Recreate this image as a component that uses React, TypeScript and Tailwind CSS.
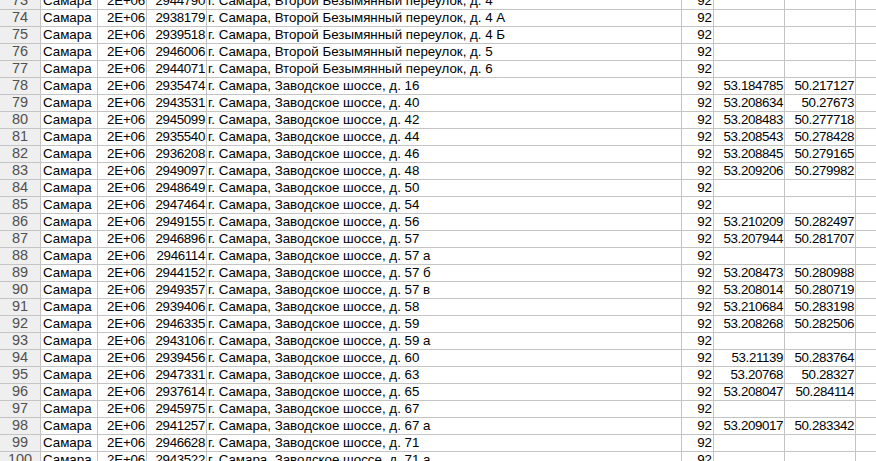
import React from "react";

type Row = [number, string, string, string, string, string];

const B = "г. Самара, Второй Безымянный переулок, д. ";
const Z = "г. Самара, Заводское шоссе, д. ";

const rows: Row[] = [
  [73, "2944790", B + "4", "92", "", ""],
  [74, "2938179", B + "4 А", "92", "", ""],
  [75, "2939518", B + "4 Б", "92", "", ""],
  [76, "2946006", B + "5", "92", "", ""],
  [77, "2944071", B + "6", "92", "", ""],
  [78, "2935474", Z + "16", "92", "53.184785", "50.217127"],
  [79, "2943531", Z + "40", "92", "53.208634", "50.27673"],
  [80, "2945099", Z + "42", "92", "53.208483", "50.277718"],
  [81, "2935540", Z + "44", "92", "53.208543", "50.278428"],
  [82, "2936208", Z + "46", "92", "53.208845", "50.279165"],
  [83, "2949097", Z + "48", "92", "53.209206", "50.279982"],
  [84, "2948649", Z + "50", "92", "", ""],
  [85, "2947464", Z + "54", "92", "", ""],
  [86, "2949155", Z + "56", "92", "53.210209", "50.282497"],
  [87, "2946896", Z + "57", "92", "53.207944", "50.281707"],
  [88, "2946114", Z + "57 а", "92", "", ""],
  [89, "2944152", Z + "57 б", "92", "53.208473", "50.280988"],
  [90, "2949357", Z + "57 в", "92", "53.208014", "50.280719"],
  [91, "2939406", Z + "58", "92", "53.210684", "50.283198"],
  [92, "2946335", Z + "59", "92", "53.208268", "50.282506"],
  [93, "2943106", Z + "59 а", "92", "", ""],
  [94, "2939456", Z + "60", "92", "53.21139", "50.283764"],
  [95, "2947331", Z + "63", "92", "53.20768", "50.28327"],
  [96, "2937614", Z + "65", "92", "53.208047", "50.284114"],
  [97, "2945975", Z + "67", "92", "", ""],
  [98, "2941257", Z + "67 а", "92", "53.209017", "50.283342"],
  [99, "2946628", Z + "71", "92", "", ""],
  [100, "2943522", Z + "71 а", "92", "", ""],
];

const cell =
  "h-[17px] border-r border-b border-[#c4c4c4] flex items-end pb-[1px] overflow-hidden whitespace-nowrap shrink-0";

export default function App() {
  return (
    <div
      className="w-[876px] h-[461px] overflow-hidden bg-white text-black"
      style={{ fontFamily: "'Liberation Sans', Arial, sans-serif" }}
    >
      <div className="-mt-[7px] flex flex-col text-[13.33px] leading-[15px]">
        {rows.map(([n, c, d, e, f, g]) => (
          <div key={n} className="flex">
            <div
              className={`${cell} w-[41px] justify-center bg-[#efefef] text-[#505050] text-[14.5px] leading-[16px] pb-0`}
            >
              {n}
            </div>
            <div className={`${cell} w-[57px] pl-[2px]`}>Самара</div>
            <div className={`${cell} w-[49px] justify-end pr-[1px] tracking-[-0.2px]`}>2E+06</div>
            <div className={`${cell} w-[60px] justify-end pr-[1px] tracking-[-0.35px]`}>{c}</div>
            <div className={`${cell} w-[475px] pl-[1px]`}>{d}</div>
            <div className={`${cell} w-[32px] justify-end pr-[1px]`}>{e}</div>
            <div className={`${cell} w-[71px] justify-end pr-[1px] tracking-[-0.4px]`}>{f}</div>
            <div className={`${cell} w-[71px] justify-end pr-[1px] tracking-[-0.4px]`}>{g}</div>
            <div className={`${cell} w-[21px] border-r-0`}></div>
          </div>
        ))}
      </div>
    </div>
  );
}
